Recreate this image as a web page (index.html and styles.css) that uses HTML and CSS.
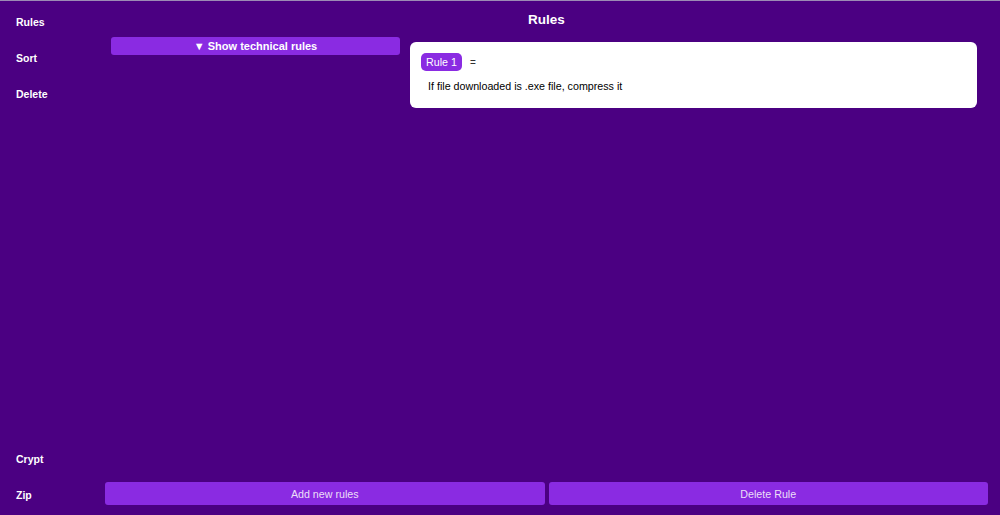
FILE: index.html
```html
<!DOCTYPE html>
<html>
<head>
<meta charset="utf-8">
<link rel="stylesheet" href="styles.css">
</head>
<body>
<div class="app">
  <nav class="sidebar">
    <div class="nav-group">
      <div class="nav-item">Rules</div>
      <div class="nav-item">Sort</div>
      <div class="nav-item">Delete</div>
    </div>
    <div class="nav-group">
      <div class="nav-item">Crypt</div>
      <div class="nav-item">Zip</div>
    </div>
  </nav>
  <main class="main">
    <h1 class="title">Rules</h1>
    <div class="content">
      <div class="left-col">
        <button class="toggle-btn">▼ Show technical rules</button>
      </div>
      <div class="card">
        <div class="card-head">
          <span class="badge">Rule 1</span>
          <span class="eq">=</span>
        </div>
        <p class="rule-text">If file downloaded is .exe file, compress it</p>
      </div>
    </div>
    <div class="footer">
      <button class="action-btn">Add new rules</button>
      <button class="action-btn">Delete Rule</button>
    </div>
  </main>
</div>
</body>
</html>
```
FILE: styles.css
```css
html, body {
  margin: 0;
  padding: 0;
}
body {
  background: #4b0082;
  border-top: 1px solid #9c8bb5;
  font-family: "Liberation Sans", Arial, sans-serif;
  color: #fff;
  height: 514px;
  overflow: hidden;
}
.app {
  display: grid;
  grid-template-columns: 105px 1fr;
  height: 514px;
}
.sidebar {
  display: flex;
  flex-direction: column;
  justify-content: space-between;
  padding: 3px 0 2px 16px;
}
.nav-item {
  height: 36px;
  line-height: 36px;
  font-size: 10.5px;
  font-weight: bold;
}
.main {
  display: flex;
  flex-direction: column;
  padding: 0 12px 10px 0;
}
.title {
  margin: 1px 0 -2px 0;
  font-size: 13.5px;
  font-weight: bold;
  text-align: center;
  height: 36px;
  line-height: 36px;
}
.content {
  flex: 1;
  display: grid;
  grid-template-columns: 289px 1fr;
  column-gap: 10px;
  align-items: start;
  padding: 0 11px 0 6px;
}
.toggle-btn {
  width: 100%;
  height: 18px;
  border: none;
  border-radius: 3px;
  background: #8a2be2;
  color: #fff;
  font-family: inherit;
  font-size: 11px;
  font-weight: bold;
  padding: 0;
}
.card {
  margin-top: 6px;
  background: #fff;
  border-radius: 6px;
  padding: 11px 11px 10px 11px;
  color: #000;
  height: 66px;
  box-sizing: border-box;
}
.card-head {
  display: flex;
  align-items: center;
  gap: 8px;
}
.badge {
  display: inline-block;
  background: #8a2be2;
  color: #fff;
  border-radius: 5px;
  height: 18px;
  line-height: 18px;
  padding: 0 5px;
  font-size: 10.7px;
}
.eq {
  font-size: 10px;
  color: #333;
}
.rule-text {
  margin: 8px 0 0 7px;
  font-size: 10.7px;
  line-height: 14px;
}
.footer {
  display: grid;
  grid-template-columns: 1fr 1fr;
  column-gap: 4px;
}
.action-btn {
  height: 23px;
  border: none;
  border-radius: 3px;
  background: #8a2be2;
  color: #ecdff8;
  font-family: inherit;
  font-size: 10.7px;
  padding: 0;
}
```
